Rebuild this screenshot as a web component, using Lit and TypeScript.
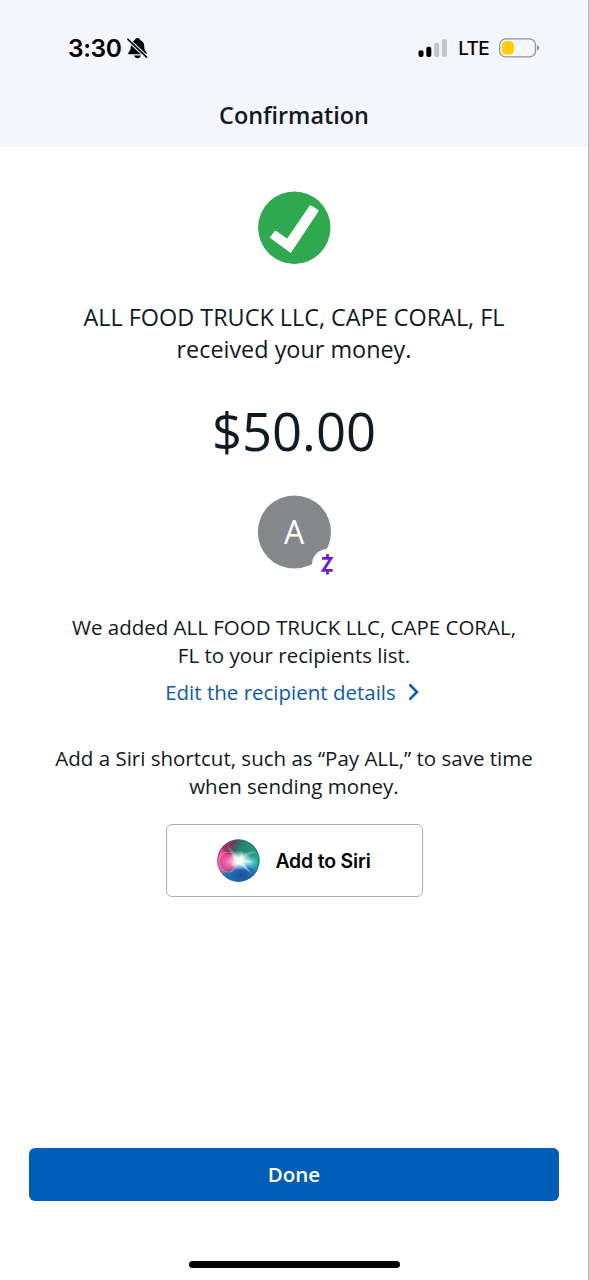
import { LitElement, html, css } from 'lit'
import { customElement, property } from 'lit/decorators.js'

@customElement('status-bar')
export class StatusBar extends LitElement {
  @property() time = ''
  @property() network = ''

  static styles = css`
    :host {
      display: flex;
      align-items: center;
      justify-content: space-between;
      height: 40px;
      padding: 28px 48px 0 68px;
      font-family: Inter, sans-serif;
      color: #000;
    }

    .group {
      display: flex;
      align-items: center;
    }

    .time {
      font-size: 24.5px;
      font-weight: 600;
      letter-spacing: -0.4px;
    }

    .bell {
      margin-left: 5px;
    }

    .network {
      margin: 0 10px 0 11px;
      font-size: 19px;
      font-weight: 500;
      letter-spacing: -0.7px;
    }

    svg {
      display: block;
    }
  `

  render() {
    return html`
      <div class="group">
        <span class="time">${this.time}</span>
        <svg class="bell" width="21" height="22" viewBox="0 0 22 22">
          <path
            d="M11 .5C9.3 .5 8.5 1.4 8.3 2.5C5.5 3.4 4 5.8 4 9C4 12.8 3.3 13.7 1.7 15.4C.9 16.5 1.4 17.6 2.5 17.6H19.5C20.6 17.6 21.1 16.5 20.3 15.4C18.7 13.7 18 12.8 18 9C18 5.8 16.5 3.4 13.7 2.5C13.5 1.4 12.7 .5 11 .5ZM7.5 18.9H14.5C14 20.7 12.8 21.7 11 21.7S8 20.7 7.5 18.9Z"
          />
          <path d="M1 2L20.5 20.5" stroke="#f4f6fb" stroke-width="4" />
          <path d="M1 2L20.5 20.5" stroke="#000" stroke-width="1.7" stroke-linecap="round" />
        </svg>
      </div>
      <div class="group">
        <svg width="29" height="20" viewBox="0 0 29 20">
          <rect x="0.5" y="12.2" width="5" height="6.8" rx="2" />
          <rect x="8.3" y="8.8" width="5" height="10.2" rx="2" />
          <rect x="16.2" y="4.8" width="5" height="14.2" rx="2" fill="#c4c5c9" />
          <rect x="23.9" y="1" width="5" height="18" rx="2" fill="#c4c5c9" />
        </svg>
        <span class="network">${this.network}</span>
        <svg width="41" height="20" viewBox="0 0 41 20">
          <rect x="0.7" y="0.9" width="35.8" height="18" rx="6" fill="none" stroke="#94959a" stroke-width="1.3" />
          <rect x="2.8" y="3" width="12.2" height="13.6" rx="4.8" fill="#fc0" />
          <path d="M38 7.2Q40.4 8 40.4 9.9T38 12.6Z" fill="#94959a" />
        </svg>
      </div>
    `
  }
}

@customElement('siri-button')
export class SiriButton extends LitElement {
  static styles = css`
    button {
      display: flex;
      align-items: center;
      justify-content: center;
      gap: 15px;
      box-sizing: border-box;
      width: 257px;
      height: 73px;
      padding: 0;
      border: 1px solid #aeaeb0;
      border-radius: 6px;
      background: #fff;
      color: #000;
      font: 600 19.4px Inter, sans-serif;
      letter-spacing: -0.15px;
    }
  `

  render() {
    return html`
      <button>
        <svg width="43" height="43" viewBox="0 0 43 43">
          <defs>
            <clipPath id="orb"><circle cx="21.5" cy="21.5" r="21.2" /></clipPath>
            <linearGradient id="base" x1="0.1" y1="0.2" x2="0.9" y2="0.6">
              <stop offset="0" stop-color="#b82a5c" />
              <stop offset="0.25" stop-color="#66405c" />
              <stop offset="0.42" stop-color="#257f6b" />
              <stop offset="1" stop-color="#28a284" />
            </linearGradient>
            <radialGradient id="pink">
              <stop offset="0" stop-color="#ee7ab2" />
              <stop offset="0.7" stop-color="#e44c91" />
              <stop offset="1" stop-color="#d82f72" stop-opacity="0" />
            </radialGradient>
            <radialGradient id="blue">
              <stop offset="0" stop-color="#17539b" />
              <stop offset="0.6" stop-color="#2370b8" />
              <stop offset="1" stop-color="#2695cf" stop-opacity="0" />
            </radialGradient>
            <radialGradient id="cyan">
              <stop offset="0" stop-color="#8ae5fa" />
              <stop offset="1" stop-color="#38b9dc" stop-opacity="0.25" />
            </radialGradient>
            <radialGradient id="glow">
              <stop offset="0" stop-color="#fff" />
              <stop offset="0.35" stop-color="#fff" stop-opacity="0.85" />
              <stop offset="1" stop-color="#fff" stop-opacity="0" />
            </radialGradient>
          </defs>
          <g clip-path="url(#orb)">
            <rect width="43" height="43" fill="url(#base)" />
            <ellipse cx="3" cy="24" rx="9" ry="18" fill="url(#pink)" />
            <ellipse cx="24" cy="37" rx="23" ry="16" fill="url(#blue)" />
            <circle cx="11.5" cy="23" r="10" fill="url(#pink)" stroke="#f5a2cc" stroke-opacity="0.5" />
            <ellipse cx="33" cy="23" rx="8" ry="6.5" fill="url(#cyan)" />
            <path d="M10 7Q18 11 22 20Q30 10 40 13Q30 16 25 22L36 36L22 25L12 35L19 23Z" fill="#fff" opacity="0.22" />
            <ellipse cx="22.5" cy="21.5" rx="12" ry="10" fill="url(#glow)" />
            <path d="M15 15L22 19L25 13L26 20L35 23L26 24L33 33L22 25L14 27L18 22Z" fill="#fff" opacity="0.45" />
          </g>
          <circle cx="21.5" cy="21.5" r="20.6" fill="none" stroke="#28648a" stroke-opacity="0.45" />
        </svg>
        <span>Add to Siri</span>
      </button>
    `
  }
}

@customElement('app-root')
export class AppRoot extends LitElement {
  static styles = css`
    :host {
      display: flex;
      flex-direction: column;
      box-sizing: border-box;
      height: 1280px;
      border-right: 1px solid #b9babd;
      background: #fff;
      color: #111923;
      font-family: 'Open Sans', sans-serif;
      text-align: center;
    }

    header {
      height: 147px;
      background: #f4f6fb;
    }

    h1 {
      margin: 0;
      padding-top: 31px;
      font-size: 23.4px;
      font-weight: 600;
      line-height: 32px;
    }

    main {
      display: flex;
      flex: 1;
      flex-direction: column;
      align-items: center;
      padding-top: 44px;
    }

    svg {
      display: block;
    }

    p {
      margin: 0;
    }

    .received {
      margin-top: 36px;
      font-size: 23.4px;
      line-height: 32px;
    }

    .amount {
      margin-top: 30px;
      font-size: 52.6px;
      line-height: 72px;
    }

    .avatar {
      margin-top: 28px;
    }

    .avatar text {
      font-size: 32px;
    }

    .note {
      margin-top: 38px;
      font-size: 20.5px;
      line-height: 28px;
    }

    .edit {
      display: flex;
      align-items: center;
      gap: 12px;
      margin: 9px 4px 0 0;
      color: #0b5cab;
      font-size: 20.5px;
      line-height: 28px;
      text-decoration: none;
    }

    .shortcut {
      margin: 38px 0 24px;
      font-size: 20.5px;
      line-height: 28px;
    }

    footer {
      display: flex;
      flex-direction: column;
      align-items: center;
      padding: 0 29px 12px;
    }

    .done {
      width: 100%;
      height: 53px;
      padding: 0 0 1px;
      border: 0;
      border-radius: 6px;
      background: #005eb8;
      color: #fff;
      font: 600 20.5px 'Open Sans', sans-serif;
    }

    .home {
      width: 211px;
      height: 7px;
      margin-top: 60px;
      border-radius: 4px;
      background: #000;
    }
  `

  render() {
    return html`
      <header>
        <status-bar time="3:30" network="LTE"></status-bar>
        <h1>Confirmation</h1>
      </header>
      <main>
        <svg width="74" height="74" viewBox="0 0 74 74">
          <circle cx="37.3" cy="36.7" r="36.2" fill="#2fa84f" />
          <path
            d="M14.2 46.4L18.6 41L30.5 49.2L53.4 15.6L60.4 19.8L33.5 60.4Z"
            fill="#fff"
            stroke="#fff"
            stroke-width="2.4"
            stroke-linejoin="round"
          />
        </svg>
        <p class="received">ALL FOOD TRUCK LLC, CAPE CORAL, FL<br />received your money.</p>
        <p class="amount">$50.00</p>
        <svg class="avatar" width="74" height="80" viewBox="0 0 74 80" overflow="visible">
          <circle cx="37.4" cy="37" r="36.6" fill="#85888b" />
          <text x="37" y="48.5" fill="#fff" text-anchor="middle">A</text>
          <circle cx="70.5" cy="69.5" r="15.5" fill="#fff" />
          <path
            d="M65 63.4H74L66.2 75.4H75.7M70.5 59V63M70.5 75.5V79.6"
            fill="none"
            stroke="#6d1ed4"
            stroke-width="2.8"
          />
        </svg>
        <p class="note">We added ALL FOOD TRUCK LLC, CAPE CORAL,<br />FL to your recipients list.</p>
        <a class="edit">
          Edit the recipient details
          <svg width="11" height="18" viewBox="0 0 11 18">
            <path d="M1.5 1.5L9 9L1.5 16.5" fill="none" stroke="currentColor" stroke-width="2.5" />
          </svg>
        </a>
        <p class="shortcut">Add a Siri shortcut, such as “Pay ALL,” to save time<br />when sending money.</p>
        <siri-button></siri-button>
      </main>
      <footer>
        <button class="done">Done</button>
        <div class="home"></div>
      </footer>
    `
  }
}
